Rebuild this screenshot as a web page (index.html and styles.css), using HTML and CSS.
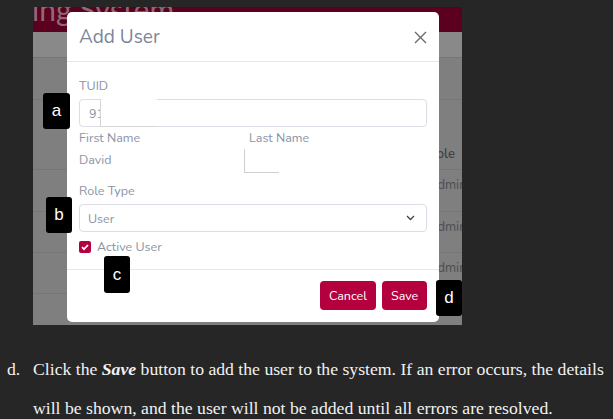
FILE: index.html
```html
<!DOCTYPE html>
<html>
<head>
<meta charset="utf-8">
<link rel="stylesheet" href="styles.css">
</head>
<body>
<div class="shot">
  <div class="topbar"><span class="brand">ing System</span></div>
  <div class="subbar"></div>
  <div class="row r1"></div>
  <div class="row r2"><span class="cell head">Role</span></div>
  <div class="row r3"><span class="cell">Admin</span></div>
  <div class="row r4"><span class="cell">Admin</span></div>
  <div class="row r5"><span class="cell">Admin</span></div>
  <div class="row r6"></div>

  <div class="modal">
    <div class="modal-header">
      <span class="title">Add User</span>
      <svg class="close" width="13" height="13" viewBox="0 0 13 13"><path d="M1 1 L12 12 M12 1 L1 12" stroke="#6b6b6b" stroke-width="1.4" fill="none"/></svg>
    </div>
    <div class="modal-body">
      <div class="label">TUID</div>
      <div class="input"><span class="val">91</span><span class="redact"></span></div>
      <div class="two">
        <div class="col">
          <div class="label">First Name</div>
          <div class="value">David</div>
        </div>
        <div class="col col2">
          <div class="label">Last Name</div>
          <div class="redact2"></div>
        </div>
      </div>
      <div class="label role">Role Type</div>
      <div class="input select"><span class="val">User</span>
        <svg class="chev" width="9" height="6" viewBox="0 0 9 6"><path d="M1 1 L4.5 4.5 L8 1" stroke="#444" stroke-width="1.3" fill="none"/></svg>
      </div>
      <div class="check-row">
        <span class="box"><svg width="12" height="12" viewBox="0 0 12 12"><path d="M3 6.2 L5 8.2 L9 4" stroke="#fff" stroke-width="1.8" fill="none"/></svg></span>
        <span class="check-label">Active User</span>
      </div>
    </div>
    <div class="modal-footer">
      <button class="btn">Cancel</button>
      <button class="btn">Save</button>
    </div>
  </div>

  <div class="badge ba">a</div>
  <div class="badge bb">b</div>
  <div class="badge bc">c</div>
  <div class="badge bd">d</div>
</div>

<div class="doc">
  <div class="num">d.</div>
  <p>Click the <b><i>Save</i></b> button to add the user to the system. If an error occurs, the details will be shown, and the user will not be added until all errors are resolved.</p>
</div>
</body>
</html>
```
FILE: styles.css
```css
html, body { margin: 0; padding: 0; }
body {
  background: #262626;
  width: 613px;
  height: 419px;
  overflow: hidden;
  padding-top: 7px;
  box-sizing: border-box;
}
.shot {
  position: relative;
  margin-left: 33px;
  width: 429px;
  height: 318px;
  overflow: hidden;
  background: #7f7f7f;
  font-family: "Nunito", Lato, "Open Sans", sans-serif;
}
.topbar {
  height: 25px;
  background: #5c0020;
  overflow: hidden;
  position: relative;
}
.brand {
  position: absolute;
  left: -1px;
  top: -16px;
  font-size: 30px;
  line-height: 36px;
  color: #8e6a78;
  white-space: nowrap;
  font-family: Lato, sans-serif;
}
.subbar { height: 25px; background: #898989; border-bottom: 1px solid #767676; }
.row { border-bottom: 1px solid #767676; display: flex; align-items: flex-start; padding-top: 6px; box-sizing: border-box; }
.r1 { height: 42px; }
.r2 { height: 70px; align-items: flex-end; padding-top: 0; padding-bottom: 6px; }
.r3 { height: 42px; }
.r4 { height: 41px; }
.r5 { height: 41px; }
.r6 { height: 32px; border-bottom: none; }
.cell {
  margin-left: 395px;
  font-size: 13px;
  color: #4a4d55;
  white-space: nowrap;
}
.cell.head { font-weight: 600; color: #3f4249; }

.modal {
  position: absolute;
  left: 34px;
  top: 5px;
  width: 372px;
  height: 310px;
  background: #fff;
  border-radius: 5px;
  display: flex;
  flex-direction: column;
}
.modal-header {
  height: 50px;
  border-bottom: 1px solid #e6e6ee;
  display: flex;
  align-items: center;
  justify-content: space-between;
  padding: 0 12px;
  box-sizing: border-box;
}
.title { font-size: 19px; color: #7a869a; padding-top: 1px; }
.close { margin-top: 1px; }
.modal-body { padding: 16px 12px 0 12px; flex: 1; }
.label { font-size: 12.5px; line-height: 16px; color: #8a93a6; }
.input {
  margin-top: 5px;
  height: 28px;
  border: 1px solid #dcdde6;
  border-radius: 4px;
  box-sizing: border-box;
  display: flex;
  align-items: center;
  padding-left: 9px;
  position: relative;
}
.val { font-size: 12.5px; color: #8a93a6; }
.redact {
  position: absolute;
  left: 20px;
  top: -1px;
  width: 57px;
  height: 28px;
  background: #fff;
  border-left: 1px solid #d6d6d6;
  border-bottom: 1px solid #d6d6d6;
  box-sizing: border-box;
}
.two { display: flex; margin-top: 3px; }
.col { width: 170px; }
.value { margin-top: 6px; font-size: 12.5px; line-height: 16px; color: #8a93a6; }
.redact2 {
  margin-top: 3px;
  margin-left: -5px;
  width: 35px;
  height: 24px;
  border-left: 1px solid #cfcfcf;
  border-bottom: 1px solid #cfcfcf;
  box-sizing: border-box;
}
.role { margin-top: 10px; }
.select { justify-content: space-between; padding-right: 11px; padding-left: 8px; }
.check-row { margin-top: 9px; display: flex; align-items: center; }
.box {
  width: 12px; height: 12px;
  background: #b4003f;
  border-radius: 2px;
  display: inline-flex;
}
.check-label { margin-left: 6px; font-size: 12.5px; color: #8a93a6; line-height: 12px; }
.modal-footer {
  border-top: 1px solid #e6e6ee;
  height: 53px;
  box-sizing: border-box;
  display: flex;
  justify-content: flex-end;
  align-items: center;
  gap: 6px;
  padding: 0 12px 1px 0;
}
.btn {
  height: 29px;
  background: #b4003f;
  color: #fff;
  border: none;
  border-radius: 4px;
  font-family: "Nunito", Lato, sans-serif;
  font-size: 12.5px;
  padding: 0 9px;
}
.btn:first-child { width: 56px; }
.btn:last-child { width: 45px; }
.badge {
  position: absolute;
  background: #000;
  color: #fff;
  border-radius: 3px;
  font-family: "Liberation Sans", Arial, sans-serif;
  font-size: 17px;
  display: flex;
  align-items: center;
  justify-content: center;
  width: 26px;
  height: 36px;
}
.ba { left: 10px; top: 86px; width: 27px; }
.bb { left: 13px; top: 190px; }
.bc { left: 71px; top: 249px; height: 37px; }
.bd { left: 403px; top: 273px; }

.doc {
  display: flex;
  margin-top: 25px;
  font-family: "Liberation Serif", "Times New Roman", serif;
  font-size: 17.7px;
  color: #f2f2f2;
  width: 610px;
}
.num { width: 26px; padding-left: 7px; line-height: 39px; flex: none; }
.doc p { margin: 0; line-height: 39px; width: 576px; }
```
